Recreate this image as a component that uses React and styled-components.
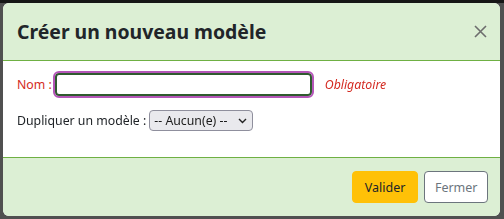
import { createGlobalStyle, styled } from "styled-components";

const Global = createGlobalStyle`
    html, body {
        margin: 0;
        padding: 0;
        height: 100%;
    }
    body {
        background: #4d4d4d;
        font-family: "Noto Sans", "Open Sans", sans-serif;
        overflow: hidden;
    }
`

const Backdrop = styled.div`
    width: 504px;
    height: 219px;
    box-sizing: border-box;
    padding: 3px 4px 3px 3px;
    background: linear-gradient(#161616 0 3px, #505050 3px);
`

const Modal = styled.div`
    height: 213px;
    display: flex;
    flex-direction: column;
    background: #fff;
    border-radius: 6px;
    overflow: hidden;
`

const Header = styled.div`
    height: 57px;
    flex-shrink: 0;
    display: flex;
    align-items: center;
    justify-content: space-between;
    padding: 0 13px 0 14px;
    background: #dcefd4;
    border-bottom: 1px solid #6fb043;
`

const Title = styled.h5`
    margin: 0 0 1px;
    font-size: 19.4px;
    font-weight: 700;
    color: #212529;
`

const Close = styled.button`
    border: none;
    background: none;
    padding: 0;
    width: 13px;
    height: 13px;
    display: flex;
    cursor: pointer;
`

const Body = styled.div`
    flex: 1;
    padding: 10px 14px 0;
    display: flex;
    flex-direction: column;
    gap: 12px;
    font-size: 12.3px;
    color: #212529;
`

const Row = styled.div`
    display: flex;
    align-items: center;
    gap: ${p => p.$gap || 3}px;
`

const Label = styled.label`
    color: ${p => p.$required ? "#d42b22" : "#212529"};
`

const Input = styled.input`
    width: 249px;
    height: 19px;
    box-sizing: content-box;
    padding: 0 2px;
    border: 2px solid #2f5a2f;
    border-radius: 4px;
    outline: 2px solid #b456b8;
    outline-offset: 0;
    margin: 2px 10px 2px 0;
    font-size: 13px;
`

const Required = styled.span`
    color: #d42b22;
    font-style: italic;
`

const Select = styled.div`
    display: flex;
    align-items: center;
    gap: 11px;
    height: 19px;
    padding: 0 5px 0 4px;
    border: 1px solid #8f8f9d;
    border-radius: 4px;
    background: #e9e9ed;
    color: #1b1b1b;
`

const Footer = styled.div`
    height: 58px;
    flex-shrink: 0;
    display: flex;
    align-items: center;
    justify-content: flex-end;
    gap: 6px;
    padding: 0 12px 0 0;
    background: #dcefd4;
    border-top: 1px solid #6fb043;
`

const Button = styled.button`
    height: 32px;
    padding: 0 ${p => p.$primary ? 12 : 9.5}px;
    border-radius: 4px;
    font-family: inherit;
    font-size: 12.5px;
    cursor: pointer;
    background: ${p => p.$primary ? "#ffc107" : "#fff"};
    color: ${p => p.$primary ? "#212529" : "#6c757d"};
    border: 1px solid ${p => p.$primary ? "#ffc107" : "#6c757d"};
`

const App = () => {
    return (
        <Backdrop>
            <Global />
            <Modal>
                <Header>
                    <Title>Créer un nouveau modèle</Title>
                    <Close aria-label="Fermer">
                        <svg width="13" height="13" viewBox="0 0 13 13">
                            <path d="M1 1 L12 12 M12 1 L1 12" stroke="#6d6d6d" strokeWidth="1.6" />
                        </svg>
                    </Close>
                </Header>
                <Body>
                    <Row $gap={0}>
                        <Label $required>Nom :</Label>
                        <Input autoFocus />
                        <Required>Obligatoire</Required>
                    </Row>
                    <Row $gap={3}>
                        <Label>Dupliquer un modèle :</Label>
                        <Select>
                            -- Aucun(e) --
                            <svg width="9" height="6" viewBox="0 0 9 6">
                                <path d="M1 1 L4.5 4.5 L8 1" stroke="#222" strokeWidth="1.4" fill="none" />
                            </svg>
                        </Select>
                    </Row>
                </Body>
                <Footer>
                    <Button $primary>Valider</Button>
                    <Button>Fermer</Button>
                </Footer>
            </Modal>
        </Backdrop>
    )
}

export default App
